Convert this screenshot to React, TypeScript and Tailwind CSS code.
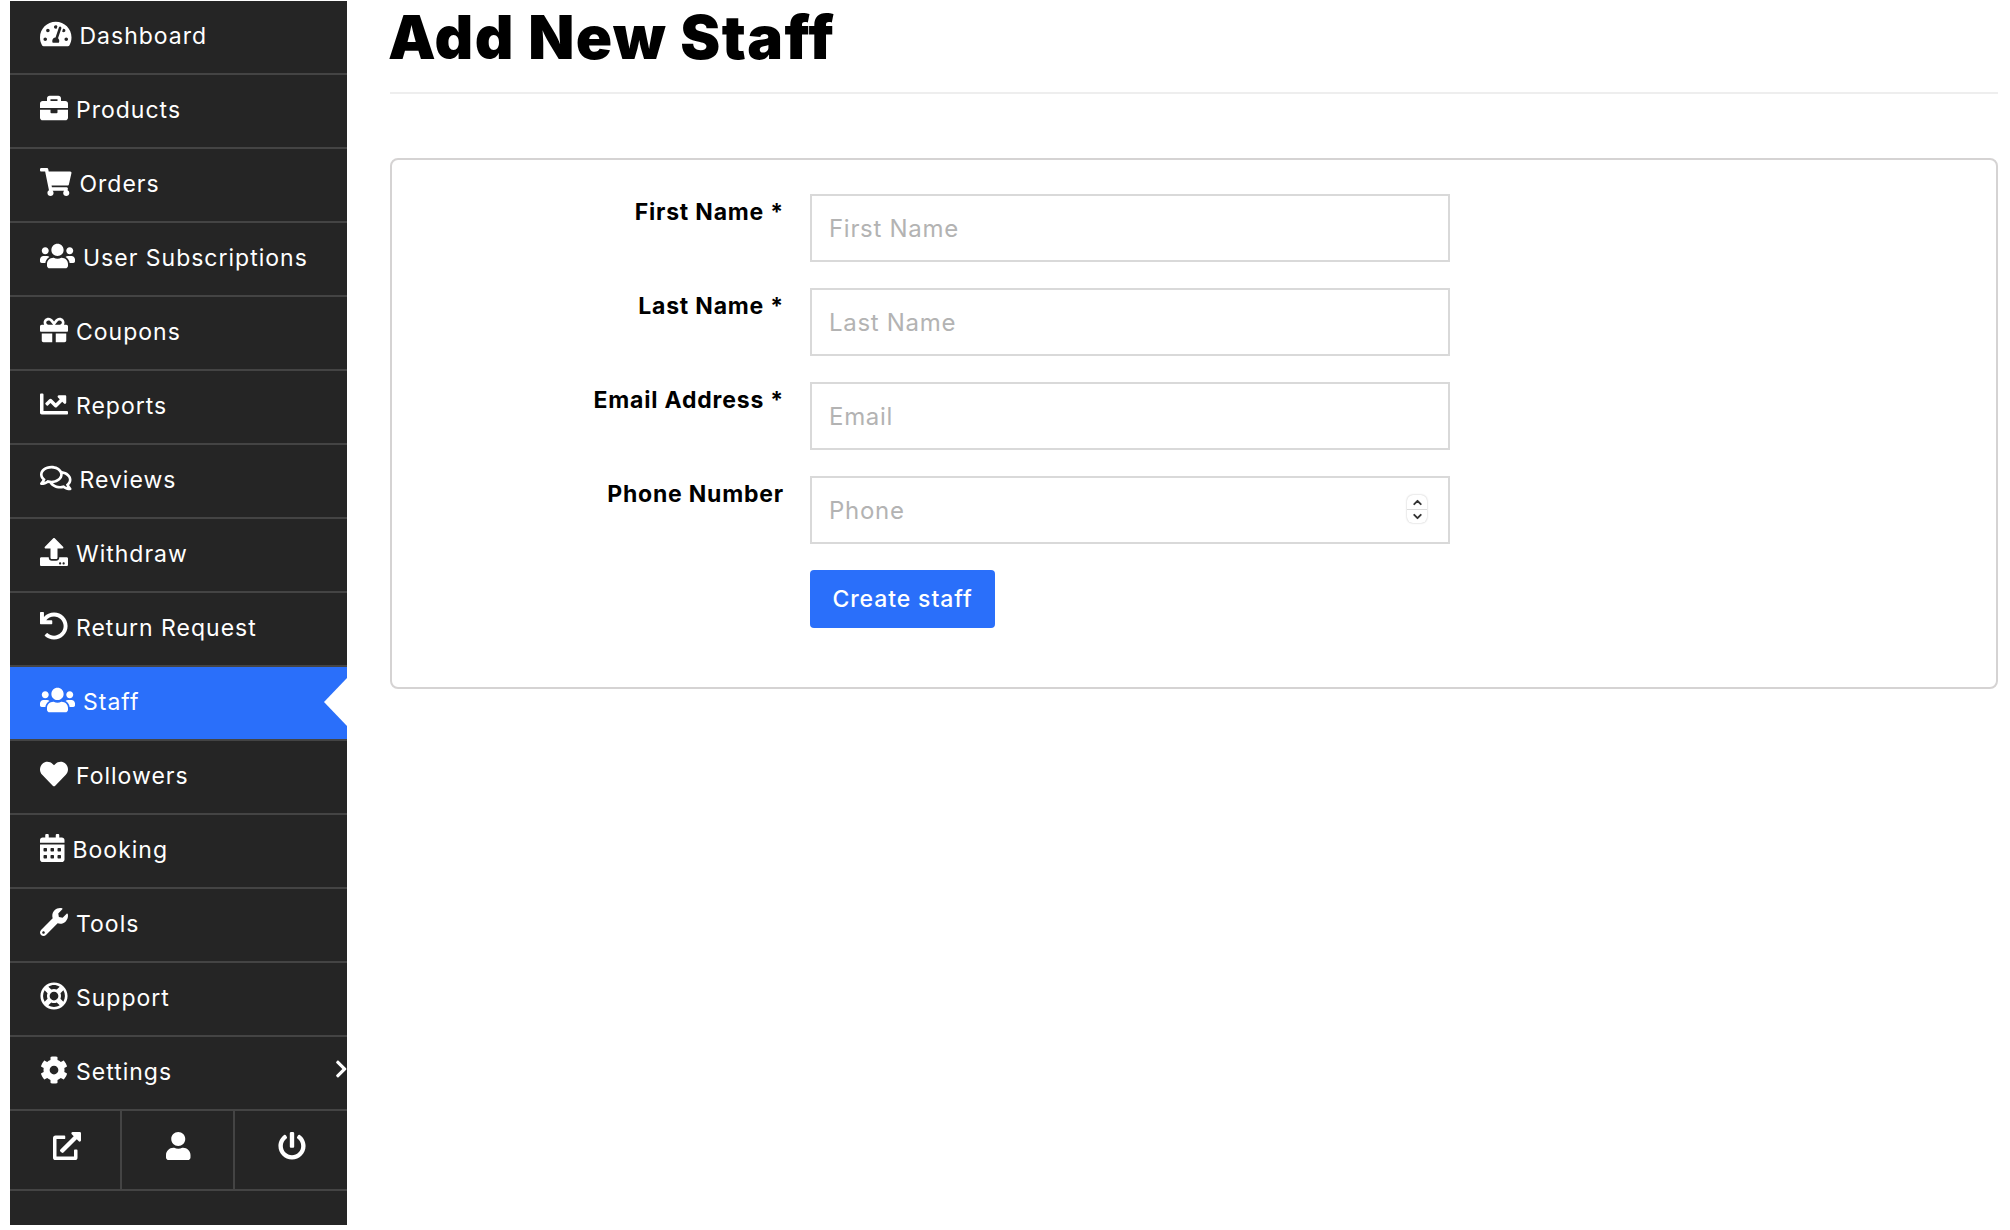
import type { IconType } from "react-icons";
import {
  FaTachometerAlt,
  FaBriefcase,
  FaShoppingCart,
  FaUsers,
  FaGift,
  FaChartLine,
  FaRegComments,
  FaUpload,
  FaUndo,
  FaHeart,
  FaCalendarAlt,
  FaWrench,
  FaRegLifeRing,
  FaCog,
  FaChevronRight,
  FaExternalLinkAlt,
  FaUser,
  FaPowerOff,
} from "react-icons/fa";
import { ChevronUp, ChevronDown } from "lucide-react";

interface NavItem {
  label: string;
  icon: IconType;
  iconWidth: string;
  active?: boolean;
  submenu?: boolean;
}

// icon widths follow each glyph's viewBox at 28px tall
const navItems: NavItem[] = [
  { label: "Dashboard", icon: FaTachometerAlt, iconWidth: "w-[31.5px]" },
  { label: "Products", icon: FaBriefcase, iconWidth: "w-[28px]" },
  { label: "Orders", icon: FaShoppingCart, iconWidth: "w-[31.5px]" },
  { label: "User Subscriptions", icon: FaUsers, iconWidth: "w-[35px]" },
  { label: "Coupons", icon: FaGift, iconWidth: "w-[28px]" },
  { label: "Reports", icon: FaChartLine, iconWidth: "w-[28px]" },
  { label: "Reviews", icon: FaRegComments, iconWidth: "w-[31.5px]" },
  { label: "Withdraw", icon: FaUpload, iconWidth: "w-[28px]" },
  { label: "Return Request", icon: FaUndo, iconWidth: "w-[28px]" },
  { label: "Staff", icon: FaUsers, iconWidth: "w-[35px]", active: true },
  { label: "Followers", icon: FaHeart, iconWidth: "w-[28px]" },
  { label: "Booking", icon: FaCalendarAlt, iconWidth: "w-[24.5px]" },
  { label: "Tools", icon: FaWrench, iconWidth: "w-[28px]" },
  { label: "Support", icon: FaRegLifeRing, iconWidth: "w-[28px]" },
  { label: "Settings", icon: FaCog, iconWidth: "w-[28px]", submenu: true },
];

const fields = [
  { label: "First Name *", placeholder: "First Name" },
  { label: "Last Name *", placeholder: "Last Name" },
  { label: "Email Address *", placeholder: "Email" },
  { label: "Phone Number", placeholder: "Phone", spinner: true },
];

function SidebarRow({ item }: { item: NavItem }) {
  const Icon = item.icon;
  return (
    <a
      className={`relative flex h-[74px] items-center gap-[8px] overflow-hidden border-b-2 border-[#444444] pl-[30px] pb-[1px] text-[23px] tracking-[1px] text-white ${
        item.active ? "bg-[#2a6ffa]" : ""
      }`}
    >
      <Icon className={`-mt-[6px] h-7 shrink-0 ${item.iconWidth}`} />
      <span>{item.label}</span>
      {item.active && (
        <span className="absolute right-0 top-[11px] h-0 w-0 border-y-[24px] border-r-[23px] border-y-transparent border-r-white" />
      )}
      {item.submenu && (
        <FaChevronRight className="absolute right-0 top-[22px] h-5 w-[12.5px]" />
      )}
    </a>
  );
}

function Sidebar() {
  return (
    <aside className="ml-[10px] mt-px h-[1224px] w-[337px] shrink-0 bg-[#252525]">
      {navItems.map((item) => (
        <SidebarRow key={item.label} item={item} />
      ))}
      <div className="grid h-[80px] grid-cols-3 border-b-2 border-[#444444] text-white">
        <div className="flex items-center justify-center border-r-2 border-[#444444] pb-2 pl-1">
          <FaExternalLinkAlt className="h-7 w-7" />
        </div>
        <div className="flex items-center justify-center border-r-2 border-[#444444] pb-2 pl-0.5">
          <FaUser className="h-7 w-[24.5px]" />
        </div>
        <div className="flex items-center justify-center pb-2 pl-0.5">
          <FaPowerOff className="h-7 w-7" />
        </div>
      </div>
    </aside>
  );
}

function StaffForm() {
  return (
    <div className="mt-[64px] h-[531px] rounded-lg border-2 border-[#d5d3d3] pt-[34px]">
      {fields.map((field) => (
        <div key={field.label} className="mb-[26px] flex">
          <label className="w-[392px] shrink-0 pt-[1px] text-right text-[23px] font-bold tracking-[0.8px] text-black">
            {field.label}
          </label>
          <div className="relative ml-[26px] w-[640px]">
            <input
              type="text"
              placeholder={field.placeholder}
              className="h-[68px] w-full border-2 border-[#d9d9d9] px-[17px] text-[24px] tracking-[0.7px] outline-none placeholder:text-[#b3b3b3]"
            />
            {field.spinner && (
              <span className="absolute right-[23px] top-[19px] flex h-[28px] w-[20px] flex-col items-center justify-center rounded-md bg-white text-[#333333] shadow-[0_0_2px_#bbbbbb]">
                <ChevronUp size={13} strokeWidth={3.5} />
                <span className="h-px w-full bg-[#dddddd]" />
                <ChevronDown size={13} strokeWidth={3.5} />
              </span>
            )}
          </div>
        </div>
      ))}
      <button className="ml-[418px] h-[58px] w-[185px] rounded bg-[#2a6ffa] text-[23px] font-medium tracking-[0.9px] text-white">
        Create staff
      </button>
    </div>
  );
}

export default function App() {
  return (
    <div className="flex min-h-[1230px] bg-white font-['Inter',sans-serif]">
      <Sidebar />
      <main className="ml-[43px] mr-[12px] flex-1">
        <h1 className="flex h-[94px] items-center border-b-2 border-[#eeeeee] pb-[18px] text-[60px] font-black tracking-[1.4px] text-black">
          <span className="-ml-[2px]">Add New Staff</span>
        </h1>
        <StaffForm />
      </main>
    </div>
  );
}
